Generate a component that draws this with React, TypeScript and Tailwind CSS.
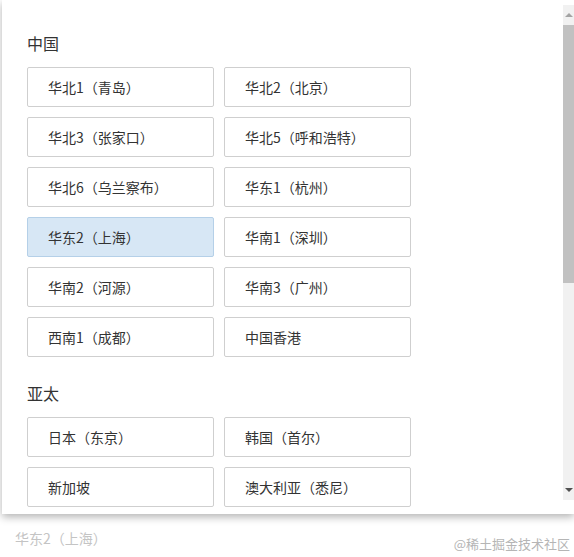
const china = [
  '华北1（青岛）',
  '华北2（北京）',
  '华北3（张家口）',
  '华北5（呼和浩特）',
  '华北6（乌兰察布）',
  '华东1（杭州）',
  '华东2（上海）',
  '华南1（深圳）',
  '华南2（河源）',
  '华南3（广州）',
  '西南1（成都）',
  '中国香港',
]

const asia = ['日本（东京）', '韩国（首尔）', '新加坡', '澳大利亚（悉尼）']

const selected = '华东2（上海）'

function RegionButton({ name }: { name: string }) {
  const active = name === selected
  return (
    <button
      type="button"
      className={
        active
          ? 'h-[40px] rounded-[2px] border border-[#b5d0e8] bg-[#d7e7f5] pl-[20px] text-left text-[14px] text-[#333]'
          : 'h-[40px] rounded-[2px] border border-[#cfcfcf] bg-white pl-[20px] text-left text-[14px] text-[#333]'
      }
    >
      {name}
    </button>
  )
}

function Section({ title, items }: { title: string; items: string[] }) {
  return (
    <div>
      <h3 className="mb-[12px] text-[16px] leading-[24px] text-[#333]">{title}</h3>
      <div className="grid grid-cols-[187px_187px] gap-x-[10px] gap-y-[10px]">
        {items.map((n) => (
          <RegionButton key={n} name={n} />
        ))}
      </div>
    </div>
  )
}

function Scrollbar() {
  return (
    <div className="mt-[5px] flex h-[495px] w-[11px] shrink-0 flex-col bg-[#f1f1f1]">
      <div className="flex h-[20px] items-center justify-center">
        <div className="h-0 w-0 border-x-[4px] border-b-[4px] border-x-transparent border-b-[#a3a3a3]" />
      </div>
      <div className="h-[258px] bg-[#c1c1c1]" />
      <div className="flex-1" />
      <div className="flex h-[20px] items-center justify-center">
        <div className="h-0 w-0 border-x-[4px] border-t-[4px] border-x-transparent border-t-[#505050]" />
      </div>
    </div>
  )
}

export default function App() {
  return (
    <div
      className="relative h-[557px] w-[574px] overflow-hidden bg-white"
      style={{ fontFamily: '"Noto Sans CJK SC", "Noto Sans", sans-serif' }}
    >
      <div className="ml-[2px] flex h-[514px] bg-white shadow-[0_3px_8px_rgba(0,0,0,0.3)]">
        <div className="flex flex-1 flex-col gap-[24px] overflow-hidden pl-[25px] pt-[31px]">
          <Section title="中国" items={china} />
          <Section title="亚太" items={asia} />
        </div>
        <Scrollbar />
      </div>
      <div className="flex items-start justify-between pl-[15px] pr-[4px] pt-[13px]">
        <span className="text-[14px] leading-[22px] text-[#c4c4c4]">{selected}</span>
        <span className="mt-[8px] text-[13px] leading-[18px] text-[#b5b5b5]">@稀土掘金技术社区</span>
      </div>
    </div>
  )
}
